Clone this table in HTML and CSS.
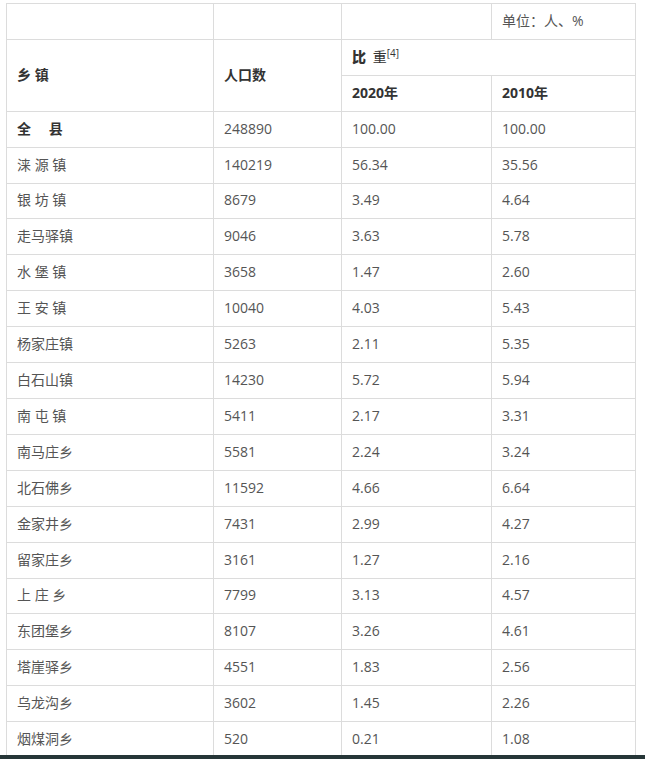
FILE: index.html
```html
<!DOCTYPE html>
<html lang="zh">
<head>
<meta charset="utf-8">
<link rel="stylesheet" href="styles.css">
</head>
<body>
<div class="wrap">
<table class="data">
<colgroup>
<col class="c1"><col class="c2"><col class="c3"><col class="c4">
</colgroup>
<tr><td></td><td></td><td></td><td>单位：人、%</td></tr>
<tr><th rowspan="2">乡 镇</th><th rowspan="2">人口数</th><th colspan="2"><b>比</b> <span class="light">重</span><sup>[4]</sup></th></tr>
<tr><th>2020年</th><th>2010年</th></tr>
<tr><th>全 　县</th><td>248890</td><td>100.00</td><td>100.00</td></tr>
<tr><td>涞 源 镇</td><td>140219</td><td>56.34</td><td>35.56</td></tr>
<tr><td>银 坊 镇</td><td>8679</td><td>3.49</td><td>4.64</td></tr>
<tr><td>走马驿镇</td><td>9046</td><td>3.63</td><td>5.78</td></tr>
<tr><td>水 堡 镇</td><td>3658</td><td>1.47</td><td>2.60</td></tr>
<tr><td>王 安 镇</td><td>10040</td><td>4.03</td><td>5.43</td></tr>
<tr><td>杨家庄镇</td><td>5263</td><td>2.11</td><td>5.35</td></tr>
<tr><td>白石山镇</td><td>14230</td><td>5.72</td><td>5.94</td></tr>
<tr><td>南 屯 镇</td><td>5411</td><td>2.17</td><td>3.31</td></tr>
<tr><td>南马庄乡</td><td>5581</td><td>2.24</td><td>3.24</td></tr>
<tr><td>北石佛乡</td><td>11592</td><td>4.66</td><td>6.64</td></tr>
<tr><td>金家井乡</td><td>7431</td><td>2.99</td><td>4.27</td></tr>
<tr><td>留家庄乡</td><td>3161</td><td>1.27</td><td>2.16</td></tr>
<tr><td>上 庄 乡</td><td>7799</td><td>3.13</td><td>4.57</td></tr>
<tr><td>东团堡乡</td><td>8107</td><td>3.26</td><td>4.61</td></tr>
<tr><td>塔崖驿乡</td><td>4551</td><td>1.83</td><td>2.56</td></tr>
<tr><td>乌龙沟乡</td><td>3602</td><td>1.45</td><td>2.26</td></tr>
<tr><td>烟煤洞乡</td><td>520</td><td>0.21</td><td>1.08</td></tr>
</table>
</div>
<div class="bottombar"></div>
</body>
</html>
```
FILE: styles.css
```css
html, body {
  margin: 0;
  padding: 0;
  background: #fff;
}
body {
  font-family: "Open Sans", "Noto Sans CJK SC", sans-serif;
  font-size: 14px;
  color: #555;
}
.wrap {
  padding: 3px 0 0 6px;
}
.data {
  border-collapse: collapse;
  table-layout: fixed;
  width: 629px;
}
.c1 { width: 207px; }
.c2 { width: 128px; }
.c3 { width: 150px; }
.c4 { width: 144px; }
.data td, .data th {
  border: 1px solid #dcdcdc;
  height: 35.92px;
  padding: 0 10px 1px;
  text-align: left;
  vertical-align: middle;
  line-height: 20px;
  box-sizing: border-box;
  white-space: nowrap;
}
.data th {
  font-weight: bold;
  color: #333;
}
.data th .light {
  font-weight: normal;
  margin-left: 3px;
}
.data sup {
  font-weight: normal;
  font-size: 10px;
  line-height: 0;
  vertical-align: 5px;
}
.bottombar {
  position: fixed;
  left: 0;
  right: 0;
  bottom: 0;
  height: 4px;
  background: #263638;
}
```
